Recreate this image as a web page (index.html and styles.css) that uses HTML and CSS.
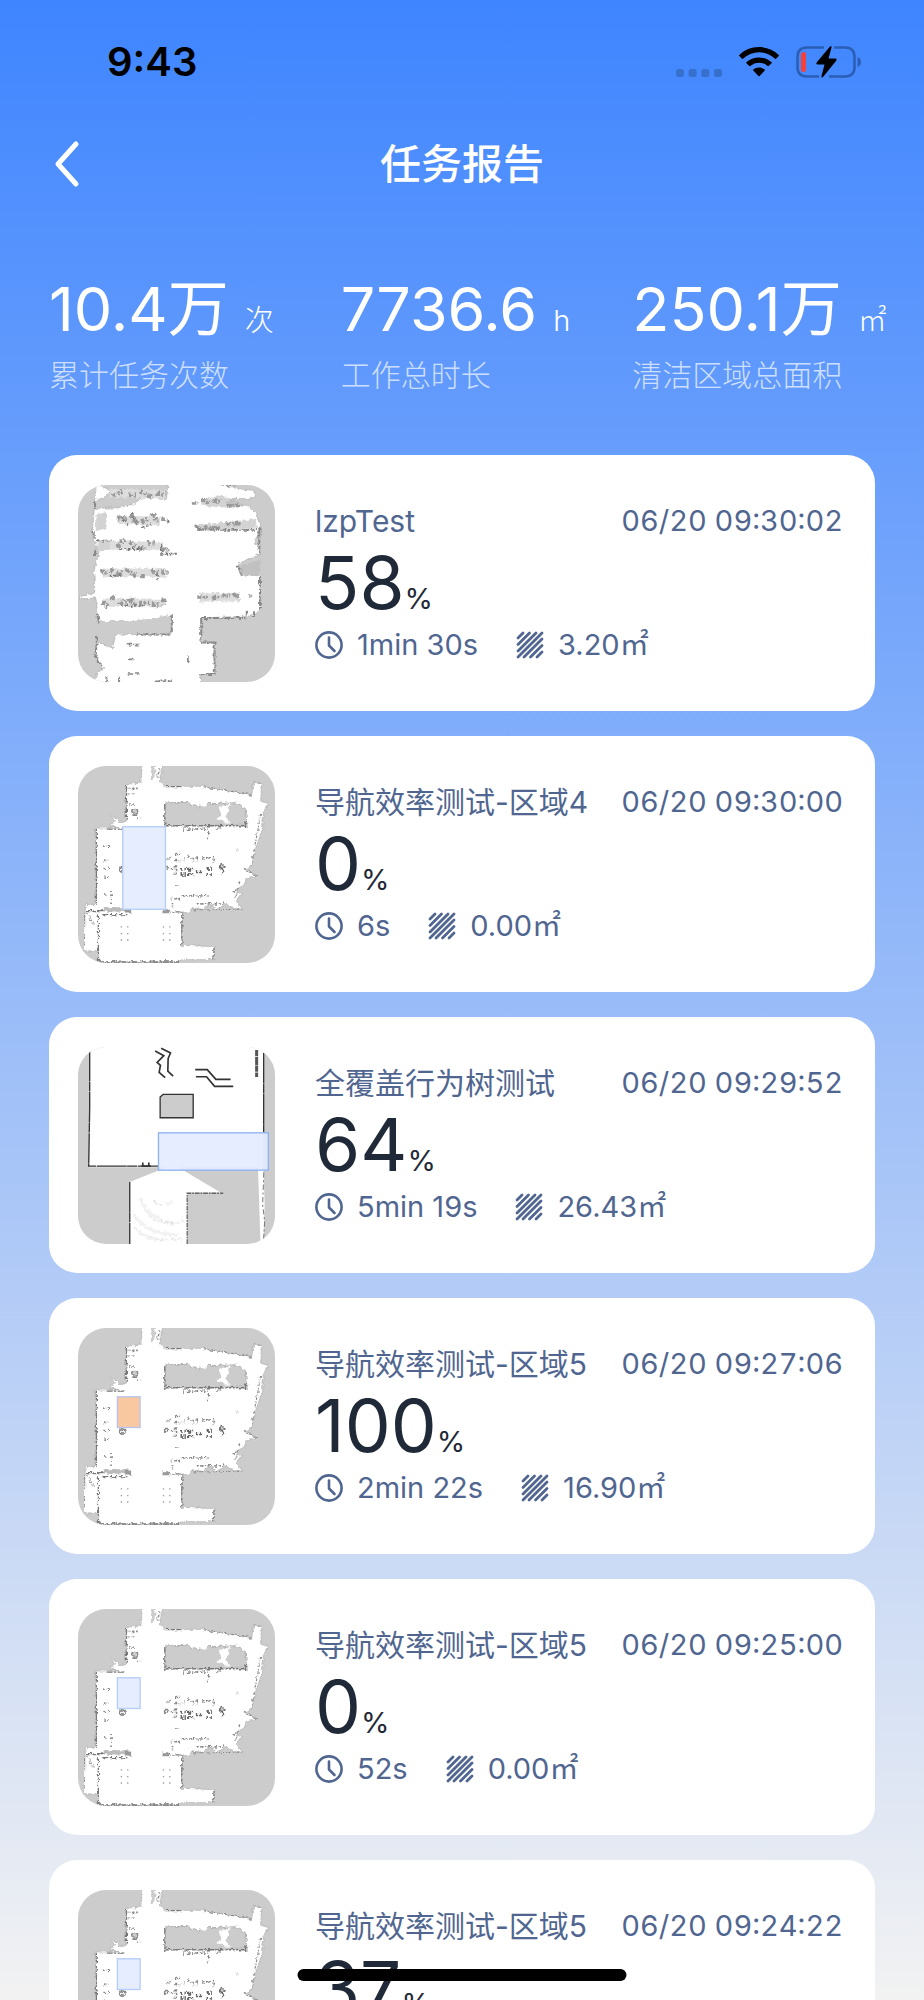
FILE: index.html
```html
<!DOCTYPE html>
<html lang="zh-CN">
<head>
    <meta charset="UTF-8">
    <meta name="viewport" content="width=device-width, initial-scale=1.0">
    <title>任务报告</title>
    <link rel="stylesheet" href="styles.css">
</head>
<body>
    <!-- Shared symbols: icons and floor maps -->
    <svg class="defs" width="0" height="0" aria-hidden="true">
        <defs>
            <filter id="rough" x="0" y="0" width="100%" height="100%" color-interpolation-filters="sRGB">
                <feTurbulence type="fractalNoise" baseFrequency="0.09" numOctaves="2" seed="4" result="n"/>
                <feDisplacementMap in="SourceGraphic" in2="n" scale="14" xChannelSelector="R" yChannelSelector="G"/>
                <feGaussianBlur stdDeviation="1.500"/>
            </filter>
            <symbol id="icon-clock" viewBox="0 0 28 28">
                <circle cx="14" cy="14" r="12.600" fill="none" stroke="currentColor" stroke-width="2.600"/>
                <path d="M14 6.500v8l5.500 5.500" fill="none" stroke="currentColor" stroke-width="2.600" stroke-linecap="round" stroke-linejoin="round"/>
            </symbol>
            <symbol id="icon-area" viewBox="0 0 28 28">
                <path d="M2 7l5-5M2 13.500L13.500 2M2 20L20 2M2 26L26 2M8 26L26 8M14.500 26L26 14.500M21 26l5-5" fill="none" stroke="currentColor" stroke-width="2.800" stroke-linecap="round"/>
            </symbol>
            <symbol id="map-hall" viewBox="55 45 590 590">
                <rect x="55" y="45" width="590" height="590" fill="#ccc"/>
                <g filter="url(#rough)">
                    <path fill="#fff" stroke="#aaa" stroke-width="2" d="M250 35L243 97L200 99L198 212L182 214L152 190L166 212L148 222L180 230L110 231L110 460L77 460L73 598L116 600L118 632L362 633L366 625L457 625L466 586L366 582L366 486L388 482L402 470L428 474L448 460L470 472L498 462L545 475L530 448L545 430L525 416L552 402L558 384L590 373L552 354L574 346L588 290L608 232L610 184L626 158L602 150L605 98L581 90L575 134L500 118L428 106L315 106L298 88L312 35Z"/>
                    <path fill="#ccc" stroke="#999" stroke-width="2" d="M315 155L385 154L412 168L436 158L528 155L556 172L562 230L552 222L315 224Z"/>
                    <path fill="#fff" d="M476 168L510 158L506 184L496 196L512 214L496 214L488 206L470 206L484 190ZM385 152l52 16 4-14z"/>
                    <path fill="#ccc" d="M276 40l14 0-8 46-10 2z"/>
                    <path fill="none" stroke="#777" stroke-width="4" d="M315 158V232M315 224H556M315 107h60M556 228v-20M142 234h52M80 478h122M128 490h75M118 632h244M366 486v96M318 482h46M462 588v36M110 234v226M116 486v146M200 105v100" stroke-dasharray="17 4 8 3"/>
                    <path fill="none" stroke="#888" stroke-width="3" d="M602 190L574 344M550 350l40 24M400 476l150-2M430 107l145 24M540 390l-14 54M74 470v124M80 484l22 34M582 92l22 6" stroke-dasharray="9 5 4 3"/>
                    <path fill="none" stroke="#888" stroke-width="5" d="M204 112h34M204 128h22M208 162h14M232 202h12M298 52l-4 28M370 234h66M445 232v34M468 234h18M130 285h18M132 330h12M134 352h14M134 378h14M154 418v40M136 428h10" stroke-dasharray="5 6 9 5"/>
                    <path fill="none" stroke="#666" stroke-width="9" d="M362 354h40M362 370h40M408 362h22M440 352h18M440 370h22" stroke-dasharray="7 5 4 6"/>
                    <path fill="none" stroke="#888" stroke-width="5" d="M372 318v12M384 314l10 10M400 320v14M412 318v12M424 320h30M460 312v24M346 310h14M346 328h18M347 342v30M320 326l12-8M322 352h20M346 404h10M366 434h80M332 442h32M338 452v14M528 298h8M518 422h12M410 458h90" stroke-dasharray="7 4"/>
                    <circle cx="225" cy="181" r="9" fill="#ccc" stroke="#888" stroke-width="4"/>
                    <circle cx="188" cy="355" r="8" fill="#eee" stroke="#777" stroke-width="4"/>
                    <circle cx="320" cy="352" r="6" fill="#eee" stroke="#888" stroke-width="4"/>
                    <path d="M480 344q8-8 16 0l-4 8h-8zM488 350v16" fill="#ccc" stroke="#666" stroke-width="4"/>
                    <path fill="#bbb" d="M132 468h70v12h-70z"/>
                    <path fill="#999" d="M196 472h18v12h-18zM308 474h20v12h-20z"/>
                </g>
                <path fill="none" stroke="#999" stroke-width="4" stroke-dasharray="4 15" d="M183 527h24M183 547h24M183 566h24M309 527h24M309 547h24M309 566h24"/>
            </symbol>
            <symbol id="map-office" viewBox="55 42 590 590">
                <rect x="55" y="42" width="590" height="590" fill="#ccc"/>
                <g filter="url(#rough)">
                    <path fill="#fff" stroke="#aaa" stroke-width="2" d="M110 35L152 60L135 80L105 92L108 112L180 110L230 96L250 78L320 84L325 35L470 35L520 50L575 58L590 72L570 84L520 82L500 96L570 108L590 128L602 160L598 190L582 206L602 250L570 262L536 278L540 310L600 314L604 412L580 434L424 440L424 514L464 516L464 608L422 610L422 640L100 640L112 606L132 590L106 555L112 510L158 530L170 488L232 490L250 484L330 492L338 432L260 450L118 452L108 380L60 384L62 372L106 366L102 300L116 250L98 180L104 110Z"/>
                    <path fill="#ccc" d="M120 450h100l38-6 78-14v58l-90 2-20-8-60 6-12 30-38-12z"/>
                    <path fill="#bbb" opacity=".65" d="M110 130l28-10 4 52-34 8zM114 204l42 2-6 30-38 2zM540 284l60-18v46l-56 2zM426 88l60-16 80 34-60 4-84-6zM410 162l176-18 6 26-180 6z"/>
                    <path fill="none" stroke="#ddd" stroke-width="26" d="M150 66l165 4M170 146l130 4M150 222l160 4M130 304l190 2M130 394l180 2M420 378h120"/>
                    <path fill="none" stroke="#999" stroke-width="14" d="M158 74l30-12M206 72h26M240 60l38 20M290 68h28M172 140l30 4M212 130l20 28M244 152l24-10M278 128l16 24M304 146h20M172 226l24-20M210 212l20 14M238 232h18M262 216h22M304 236h22M122 300l20 8M150 296l14 6M174 314l14-16M198 294l30 20M244 314h14M274 296l20 12M304 304h20M126 394l22 14M154 380h12M178 398l28-12M208 384l20 18M238 396h30M276 400h20M312 382v18" stroke-dasharray="11 5 6 4"/>
                    <path fill="none" stroke="#777" stroke-width="6" d="M112 208h40M178 234h76M304 222v26h50M150 314h40M246 168l30-8M184 404h70M184 136l20 24M216 124l12 30M294 308v16M326 150v10" stroke-dasharray="8 5"/>
                    <path fill="none" stroke="#999" stroke-width="10" d="M396 96h20M426 84l20 12M458 90h28M500 104h40M430 170h50M500 158h44M412 378h32M456 380l26-4M488 374h22M518 366l24 16M568 376h8" stroke-dasharray="13 4 7 4"/>
                    <path fill="none" stroke="#888" stroke-width="6" d="M412 176h176M404 166l24 8M424 440h138M424 440v74h40v94h-42M600 316v98M582 420v14M598 168v80M232 490h100M336 432v54M118 454l-6-26M102 180v20M106 236v20M112 494l-4 60 20 36M140 618v20M178 616v20M532 280l14 34M106 90v22" stroke-dasharray="20 3 8 3"/>
                    <path fill="none" stroke="#888" stroke-width="5" d="M204 520h36M204 608h38M205 564h20M384 556v16M560 418v16M286 630h50M488 42h40" stroke-dasharray="16 3"/>
                </g>
            </symbol>
            <symbol id="map-lobby" viewBox="55 48 590 590">
                <rect x="55" y="48" width="590" height="590" fill="#ccc"/>
                <path fill="#fff" d="M90 40H610V408H355L482 484H382V645H210V452L320 408H88Z"/>
                <path fill="#fff" d="M594 408h16l4 110-4 130h-8z"/>
                <path fill="none" stroke="#333" stroke-width="4" d="M90 60V230L87 405H296M611 66V304M210 452V638" stroke-dasharray="90 1 30 2"/>
                <path fill="none" stroke="#777" stroke-width="3" d="M612 410l-4 110 6 50-4 68" stroke-dasharray="6 7 16 8"/>
                <path fill="none" stroke="#666" stroke-width="4" d="M382 638V486H490" stroke-dasharray="14 3 5 3"/>
                <path fill="none" stroke="#333" stroke-width="5" d="M286 60L312 74L292 94L302 103L298 124L316 140M304 52L332 66L325 82L324 120L340 135M406 116H442L468 145H512M408 137H440L464 166H520"/>
                <path fill="none" stroke="#555" stroke-width="9" d="M590 57V138" stroke-dasharray="18 2 26 1"/>
                <path fill="#ccc" stroke="#333" stroke-width="4" d="M301 198l9-8h90v70h-99z"/>
                <path fill="none" stroke="#333" stroke-width="5" d="M249 405v-11M267 405v-11M245 405h28"/>
                <g filter="url(#rough)">
                    <path fill="none" stroke="#e6e6e6" stroke-width="5" d="M255 520q8 50 65 56t50-20M225 590q30 30 90 35M280 510l30 14M270 545q30 28 80 28M300 632q40-10 70-8" stroke-dasharray="12 5"/>
                    <path fill="none" stroke="#f2f2f2" stroke-width="9" d="M222 550q40 60 130 60M240 500q20 50 60 60M230 600l60 30M320 520l20-10"/>
                </g>
            </symbol>
        </defs>
    </svg>

    <div class="screen">
        <div class="status-bar">
            <span class="status-time">9:43</span>
            <div class="status-icons">
                <svg class="dots" viewBox="0 0 46 8" width="46" height="8" aria-hidden="true">
                    <g fill="#376fcc">
                        <rect width="8" height="8" rx="2.500"/>
                        <rect x="12.600" width="8" height="8" rx="2.500"/>
                        <rect x="25.300" width="8" height="8" rx="2.500"/>
                        <rect x="38" width="8" height="8" rx="2.500"/>
                    </g>
                </svg>
                <svg viewBox="0 0 40 30" width="40" height="30" aria-hidden="true">
                    <path d="M20 0C27.700 0 34.600 3 39.700 7.900Q40.200 8.500 39.700 9L37 11.700Q36.500 12.100 36 11.700A23 23 0 0 0 4 11.700Q3.500 12.100 3 11.700L.3 9Q-.2 8.500 .3 7.900C5.400 3 12.300 0 20 0Z"/>
                    <path d="M20 10.500C24.900 10.500 29.300 12.300 32.600 15.300Q33.100 15.800 32.600 16.300L29.700 19.100Q29.200 19.500 28.700 19.100A13 13 0 0 0 11.300 19.100Q10.800 19.500 10.300 19.100L7.400 16.300Q6.900 15.800 7.400 15.300C10.700 12.300 15.100 10.500 20 10.500Z"/>
                    <path d="M20 20.500C22.200 20.500 24.200 21.300 25.700 22.600Q26.200 23.100 25.700 23.600L20.600 28.900Q20 29.500 19.400 28.900L14.300 23.600Q13.800 23.100 14.300 22.600C15.800 21.300 17.800 20.500 20 20.500Z"/>
                </svg>
                <svg viewBox="0 0 66 34" width="66" height="34" aria-hidden="true">
                    <path d="M28 2.500H11Q1.500 2.500 1.500 12V22Q1.500 31.500 11 31.500H23M38 2.500H49Q58.500 2.500 58.500 12V22Q58.500 31.500 49 31.500H33" fill="none" stroke="#2a5eb5" stroke-width="2.500"/>
                    <path d="M61.500 12Q65 13.500 65 17T61.500 22Z" fill="#2a5eb5"/>
                    <rect x="5" y="7" width="5" height="20" rx="2.500" fill="#f5413c"/>
                    <path d="M34 1.500Q36 .5 35.500 2.500L32.500 13.500H39.500Q41.500 14 40 16L27 32Q25 33.500 25.500 31L28.500 19.500H21.500Q19.500 19 21 17Z" fill="#000"/>
                </svg>
            </div>
        </div>

        <header class="nav">
            <button class="back" type="button" aria-label="返回">
                <svg viewBox="0 0 26 48" width="26" height="48" aria-hidden="true">
                    <path d="M22 4L4 24L22 44" fill="none" stroke="#fff" stroke-width="5" stroke-linecap="round" stroke-linejoin="round"/>
                </svg>
            </button>
            <h1>任务报告</h1>
        </header>

        <section class="stats">
            <div class="stat">
                <div class="stat-value">10.4万<span class="unit">次</span></div>
                <div class="stat-label">累计任务次数</div>
            </div>
            <div class="stat">
                <div class="stat-value">7736.6<span class="unit">h</span></div>
                <div class="stat-label">工作总时长</div>
            </div>
            <div class="stat">
                <div class="stat-value">250.1万<span class="unit">㎡</span></div>
                <div class="stat-label">清洁区域总面积</div>
            </div>
        </section>

        <main class="list">
            <article class="card">
                <svg class="thumb" viewBox="0 0 590 590" aria-hidden="true">
                    <use href="#map-office" width="590" height="590"/>
                </svg>
                <div class="info">
                    <div class="row"><h2>lzpTest</h2><time>06/20 09:30:02</time></div>
                    <div class="percent">58<small>%</small></div>
                    <div class="meta">
                        <span><svg class="icon"><use href="#icon-clock"/></svg>1min 30s</span>
                        <span><svg class="icon"><use href="#icon-area"/></svg>3.20㎡</span>
                    </div>
                </div>
            </article>

            <article class="card">
                <svg class="thumb" viewBox="0 0 590 590" aria-hidden="true">
                    <use href="#map-hall" width="590" height="590"/>
                    <rect class="zone" x="134" y="182" width="128" height="247"/>
                </svg>
                <div class="info">
                    <div class="row"><h2>导航效率测试-区域4</h2><time>06/20 09:30:00</time></div>
                    <div class="percent">0<small>%</small></div>
                    <div class="meta">
                        <span><svg class="icon"><use href="#icon-clock"/></svg>6s</span>
                        <span><svg class="icon"><use href="#icon-area"/></svg>0.00㎡</span>
                    </div>
                </div>
            </article>

            <article class="card">
                <svg class="thumb" viewBox="0 0 590 590" aria-hidden="true">
                    <use href="#map-lobby" width="590" height="590"/>
                    <rect class="zone zone-strong" x="241" y="257" width="329" height="112"/>
                </svg>
                <div class="info">
                    <div class="row"><h2>全覆盖行为树测试</h2><time>06/20 09:29:52</time></div>
                    <div class="percent">64<small>%</small></div>
                    <div class="meta">
                        <span><svg class="icon"><use href="#icon-clock"/></svg>5min 19s</span>
                        <span><svg class="icon"><use href="#icon-area"/></svg>26.43㎡</span>
                    </div>
                </div>
            </article>

            <article class="card">
                <svg class="thumb" viewBox="0 0 590 590" aria-hidden="true">
                    <use href="#map-hall" width="590" height="590"/>
                    <rect class="zone zone-done" x="118" y="206" width="68" height="92"/>
                </svg>
                <div class="info">
                    <div class="row"><h2>导航效率测试-区域5</h2><time>06/20 09:27:06</time></div>
                    <div class="percent">100<small>%</small></div>
                    <div class="meta">
                        <span><svg class="icon"><use href="#icon-clock"/></svg>2min 22s</span>
                        <span><svg class="icon"><use href="#icon-area"/></svg>16.90㎡</span>
                    </div>
                </div>
            </article>

            <article class="card">
                <svg class="thumb" viewBox="0 0 590 590" aria-hidden="true">
                    <use href="#map-hall" width="590" height="590"/>
                    <rect class="zone" x="118" y="206" width="68" height="92"/>
                </svg>
                <div class="info">
                    <div class="row"><h2>导航效率测试-区域5</h2><time>06/20 09:25:00</time></div>
                    <div class="percent">0<small>%</small></div>
                    <div class="meta">
                        <span><svg class="icon"><use href="#icon-clock"/></svg>52s</span>
                        <span><svg class="icon"><use href="#icon-area"/></svg>0.00㎡</span>
                    </div>
                </div>
            </article>

            <article class="card">
                <svg class="thumb" viewBox="0 0 590 590" aria-hidden="true">
                    <use href="#map-hall" width="590" height="590"/>
                    <rect class="zone" x="118" y="206" width="68" height="92"/>
                </svg>
                <div class="info">
                    <div class="row"><h2>导航效率测试-区域5</h2><time>06/20 09:24:22</time></div>
                    <div class="percent">37<small>%</small></div>
                </div>
            </article>
        </main>

        <div class="home-indicator"></div>
    </div>
</body>
</html>
```

FILE: styles.css
```css
* { box-sizing: border-box; }
body {
    margin: 0;
    font-family: Inter, "Noto Sans CJK SC", sans-serif;
    font-size: 29px; line-height: 40px; color: #506690;
}
h1, h2 { margin: 0; font-weight: 400; }
.defs { position: absolute; }
.screen {
    position: relative; height: 100vh; overflow: hidden;
    background: linear-gradient(180deg, #3f85ff 0%, #f2f2f2 100%);
}

/* Status bar */
.status-bar {
    display: flex; justify-content: space-between; align-items: center;
    height: 124px; padding: 0 62px 0 107px;
}
.status-time { font-size: 40px; font-weight: 600; color: #000; }
.status-icons { display: flex; align-items: center; gap: 17px; }
.dots { align-self: flex-end; margin-bottom: 2px; }

/* Title bar */
.nav {
    display: grid; grid-template-columns: 1fr auto 1fr; align-items: center;
    height: 80px; padding: 0 54px; color: #fff;
}
.nav h1 { font-size: 41px; font-weight: 500; line-height: 56px; }
.back {
    display: flex; justify-self: start; padding: 0;
    background: none; border: none; cursor: pointer;
}

/* Totals */
.stats {
    display: grid; grid-template-columns: repeat(3, 1fr);
    padding: 69px 0 60px 49px; color: #fff;
}
.stat-value { font-size: 61px; line-height: 72px; white-space: nowrap; }
.stat-value .unit { margin-left: 16px; font-size: 29px; font-weight: 300; line-height: 1; }
.stat-label { margin-top: 10px; font-size: 30px; font-weight: 300; color: rgba(255,255,255,0.7); }

/* Report cards */
.list { display: flex; flex-direction: column; gap: 25px; padding: 0 49px; }
.card {
    display: flex; align-items: center; gap: 40px; flex-shrink: 0;
    height: 256px; padding: 0 32px 0 29px;
    background: #fff; border-radius: 28px;
}
.thumb { width: 197px; height: 197px; border-radius: 28px; flex-shrink: 0; }
.info { flex: 1; min-width: 0; height: 164px; }
.row { display: flex; justify-content: space-between; white-space: nowrap; }
.row h2 { font-size: 30px; line-height: 40px; }
.row time { font-variant-numeric: tabular-nums; }
.percent { font-size: 73px; line-height: 84px; color: #1f2937; }
.percent small { font-size: 29px; line-height: 1; }
.meta { display: flex; gap: 38px; }
.meta span { display: flex; align-items: center; gap: 14px; }
.icon { width: 28px; height: 28px; }
.zone { fill: #e5edff; stroke: #b5cdfa; stroke-width: 4; }
.zone-strong { fill: rgba(226,235,255,0.88); stroke: #8fb2f3; }
.zone-done { fill: #f8c9a0; stroke: #b9c4ee; }

.home-indicator {
    position: absolute; bottom: 19px; left: 50%; transform: translateX(-50%);
    width: 329px; height: 12px; border-radius: 6px; background: #000;
}
```
